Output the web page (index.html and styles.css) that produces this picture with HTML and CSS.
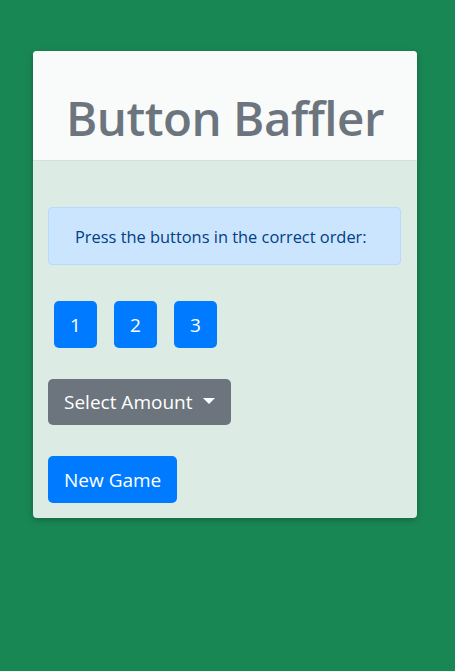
FILE: index.html
```html
<!DOCTYPE html>
<html>
<head>
<meta charset="utf-8">
<link rel="stylesheet" href="styles.css">
</head>
<body>
<div class="card">
  <div class="card-header">
    <h1 class="title">Button Baffler</h1>
  </div>
  <div class="card-body">
    <div class="alert">Press the buttons in the correct order:</div>
    <div class="nums">
      <button class="btn btn-primary btn-num">1</button>
      <button class="btn btn-primary btn-num">2</button>
      <button class="btn btn-primary btn-num">3</button>
    </div>
    <div class="row">
      <button class="btn btn-secondary">Select Amount <span class="caret"></span></button>
    </div>
    <div class="row">
      <button class="btn btn-primary">New Game</button>
    </div>
  </div>
</div>
</body>
</html>
```

FILE: styles.css
```css
* { box-sizing: border-box; }
html, body { margin: 0; padding: 0; }
body {
  background: #198754;
  width: 455px;
  height: 671px;
  font-family: "Open Sans", "Noto Sans", sans-serif;
  padding-top: 51px;
  padding-left: 33px;
}
.card {
  width: 384px;
  background: #dcebe4;
  border-radius: 4px;
  box-shadow: 0 2px 6px rgba(0,0,0,0.25);
  overflow: hidden;
}
.card-header {
  background: #f9fafa;
  height: 110px;
  border-bottom: 1px solid #d5e0db;
  display: flex;
  align-items: flex-end;
  justify-content: center;
}
.title {
  margin: 0 0 14px 0;
  font-size: 47.5px;
  font-weight: 600;
  color: #6c757d;
  line-height: 1.2;
  letter-spacing: -0.5px;
}
.card-body {
  padding: 46px 15px 15px 15px;
  display: flex;
  flex-direction: column;
  align-items: flex-start;
}
.alert {
  width: 353px;
  height: 58px;
  background: #cce5ff;
  border: 1px solid #b8daff;
  border-radius: 4px;
  color: #004085;
  font-size: 16.4px;
  padding: 0 26px;
  display: flex;
  align-items: center;
}
.nums {
  margin-top: 36px;
  display: flex;
  gap: 17px;
  padding-left: 6px;
}
.btn {
  font-family: inherit;
  border: none;
  border-radius: 5px;
  color: #fff;
  font-size: 19px;
  height: 47px;
  padding: 0 16px;
  display: flex;
  align-items: center;
  cursor: pointer;
}
.btn-num { width: 43px; justify-content: center; padding: 0; }
.btn-primary { background: #007bff; }
.btn-secondary { background: #6c757d; height: 46px; }
.row { margin-top: 31px; }
.caret {
  display: inline-block;
  margin-left: 11px;
  width: 0; height: 0;
  border-left: 6px solid transparent;
  border-right: 6px solid transparent;
  border-top: 6px solid #fff;
  position: relative;
  top: -1px;
}
```
